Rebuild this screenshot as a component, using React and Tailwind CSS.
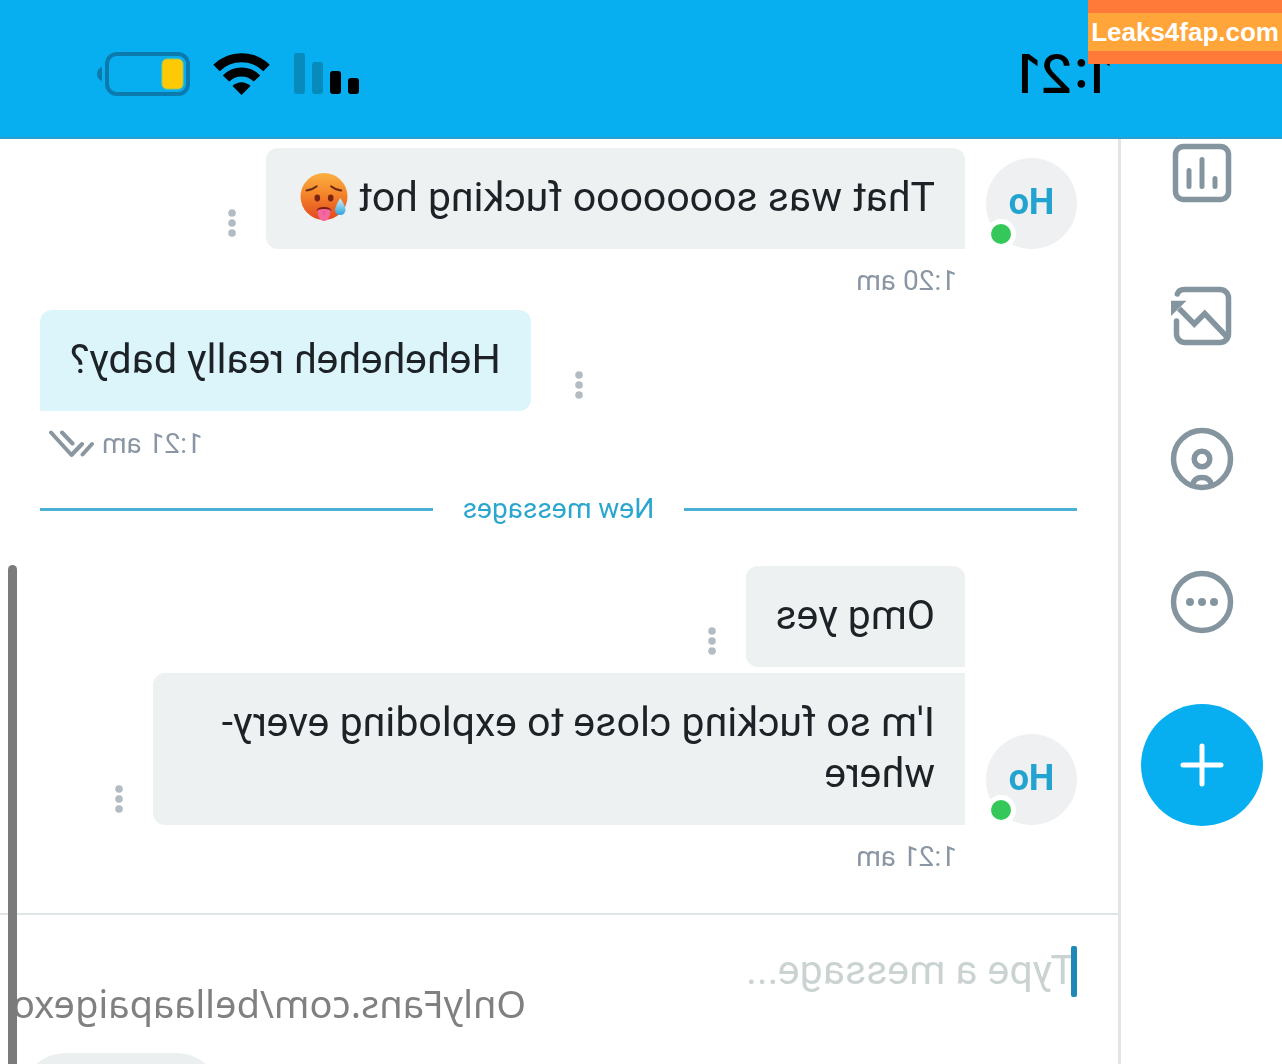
import React, { useState } from 'react';

const SignalIcon = () => (
  <svg width="66" height="42" viewBox="0 0 66 42" fill="#000">
    <rect x="0" y="25" width="11" height="16" rx="3" />
    <rect x="18" y="18" width="11" height="23" rx="3" />
    <rect x="36" y="9" width="11" height="32" rx="3" fill="#078bbd" />
    <rect x="54" y="0" width="11" height="41" rx="3" fill="#078bbd" />
  </svg>
);

const WifiIcon = () => (
  <svg width="57" height="42" viewBox="0 0 57 42" fill="none" stroke="#000" strokeWidth="9">
    <path d="M3.5 15A35.5 35.5 0 0 1 53.5 15" />
    <path d="M13 25.5A21.5 21.5 0 0 1 44 25.5" />
    <path d="M28.5 42L19.5 33Q28.5 25.5 37.5 33Z" fill="#000" stroke="none" />
  </svg>
);

const BatteryIcon = () => (
  <svg width="94" height="44" viewBox="0 0 94 44">
    <rect x="2" y="2" width="81" height="40" rx="10" fill="none" stroke="#0b7aad" strokeWidth="4" />
    <rect x="7" y="7" width="21" height="30" rx="5" fill="#ffc905" stroke="#a5c95a" strokeWidth="1" />
    <path d="M88 15Q93 17 93 22Q93 27 88 29Z" fill="#0b7aad" />
  </svg>
);

const HotFace = () => (
  <svg className="-my-2 mr-1 inline-block align-[-3px]" width="48" height="50" viewBox="0 0 48 50" role="img" aria-label="hot face">
    <defs>
      <linearGradient id="face" x1="0" y1="0" x2="0" y2="1">
        <stop offset="0" stopColor="#fbb040" />
        <stop offset="0.4" stopColor="#f58a2c" />
        <stop offset="1" stopColor="#e2481d" />
      </linearGradient>
      <linearGradient id="drop" x1="0" y1="0" x2="0" y2="1">
        <stop offset="0" stopColor="#d3f0fb" />
        <stop offset="1" stopColor="#2fa5dc" />
      </linearGradient>
    </defs>
    <circle cx="24" cy="24.5" r="23.5" fill="url(#face)" />
    <path d="M6.7 18.5Q12 18.3 17 14.3M41.5 18.5Q36.5 18.3 31.3 14.3" fill="none" stroke="#6b2b12" strokeWidth="2" strokeLinecap="round" />
    <ellipse cx="17.3" cy="26" rx="2.8" ry="3.4" fill="#7a2411" />
    <ellipse cx="30.7" cy="26" rx="2.8" ry="3.4" fill="#7a2411" />
    <path d="M16.5 39Q17 35 24 35Q31 35 31.5 39Z" fill="#7a1d10" />
    <path d="M17.5 38Q24 36 30.5 38L30 43Q28 49 24 49Q20 49 18 43Z" fill="#f5679f" />
    <path d="M24 39V43" stroke="#de5089" strokeWidth="1" />
    <path d="M7.8 26Q2.5 34 2.5 38Q3 43 7.8 43Q12.8 43 13 38Q12.5 34 7.8 26Z" fill="url(#drop)" />
  </svg>
);

const ReadChecks = () => (
  <svg width="46" height="28" viewBox="0 0 46 28" fill="none" stroke="#8a96a0" strokeWidth="4" strokeLinecap="round" strokeLinejoin="round">
    <path d="M43 2.5L22.5 25L12 14M32 2.5L21.5 13.5M2 14L11.5 24.5" />
  </svg>
);

const navItems = [
  {
    label: 'Statistics',
    icon: (
      <>
        <rect x="5.5" y="5.5" width="53" height="53" rx="8" />
        <path d="M19 37.5V45.5M32 18.5V45.5M45 29.5V45.5" strokeWidth="5" />
      </>
    ),
  },
  {
    label: 'Vault',
    icon: (
      <>
        <path d="M56.7 10Q55 5.5 50 5.5H14A8.5 8.5 0 0 0 5.5 14V50A8.5 8.5 0 0 0 14 58.5H49A8.5 8.5 0 0 0 57.5 50V37" />
        <path d="M7 53L29.3 29.5L39.7 40L55 24.5" strokeLinecap="butt" strokeLinejoin="miter" />
        <path d="M63 16.7H47.5L63 32Z" fill="currentColor" stroke="none" />
      </>
    ),
  },
  {
    label: 'Profile',
    icon: (
      <>
        <circle cx="32" cy="32" r="28.5" />
        <circle cx="32" cy="32" r="7.8" />
        <path d="M22.5 58Q24 50.5 32 50.5Q40 50.5 41.5 58" />
      </>
    ),
  },
  {
    label: 'More',
    icon: (
      <>
        <circle cx="32" cy="32" r="28.5" />
        <g fill="currentColor" stroke="none">
          <circle cx="20" cy="32" r="4" />
          <circle cx="32" cy="32" r="4" />
          <circle cx="44" cy="32" r="4" />
        </g>
      </>
    ),
  },
];

const StatusBar = () => (
  <header className="flex h-[139px] shrink-0 items-center border-b-2 border-[#2b9fcd] bg-[#07aff1] pt-2.5 pr-24 pl-[170px]">
    <span className="font-['Inter',sans-serif] text-[54px] leading-none font-medium text-black">1:21</span>
    <div className="ml-auto flex items-center gap-[23px]">
      <SignalIcon />
      <WifiIcon />
      <BatteryIcon />
    </div>
  </header>
);

const Sidebar = () => (
  <nav className="flex w-[164px] shrink-0 flex-col items-center border-r-[3px] border-[#e0e5e8] pt-0.5 pr-0.5">
    <div className="flex flex-col gap-[79px]">
      {navItems.map((item) => (
        <button key={item.label} type="button" aria-label={item.label} className="text-[#8595a0]">
          <svg width="64" height="64" viewBox="0 0 64 64" fill="none" stroke="currentColor" strokeWidth="5.5" strokeLinecap="round" strokeLinejoin="round">
            {item.icon}
          </svg>
        </button>
      ))}
    </div>
    <button type="button" aria-label="New post" className="mt-[70px] flex size-[122px] items-center justify-center rounded-full bg-[#07aff1]">
      <svg width="44" height="44" viewBox="0 0 44 44" stroke="#fff" strokeWidth="5" strokeLinecap="round">
        <path d="M22 3V41M3 22H41" />
      </svg>
    </button>
  </nav>
);

const Avatar = () => (
  <div className="relative flex size-[91px] items-center justify-center rounded-full bg-[#eef0f1] pb-1 text-4xl font-bold text-[#22a3d0]">
    Ho
    <span className="absolute right-0 bottom-0 size-[30px] rounded-full border-[5px] border-white bg-[#34c759]" />
  </div>
);

const MessageMenu = () => (
  <button type="button" aria-label="Message options" className="mb-3">
    <svg width="8" height="28" viewBox="0 0 8 28" fill="#b3bcc2">
      <circle cx="4" cy="4" r="3.8" />
      <circle cx="4" cy="14" r="3.8" />
      <circle cx="4" cy="24" r="3.8" />
    </svg>
  </button>
);

const Received = ({ avatar, corners, children }) => (
  <div className="flex items-end">
    <div className="mr-[21px] w-[91px] shrink-0">{avatar && <Avatar />}</div>
    <p className={`mr-[30px] max-w-[812px] bg-[#edf1f2] px-[30px] pt-6 pb-[26px] text-[41px] leading-[51px] ${corners}`}>
      {children}
    </p>
    <MessageMenu />
  </div>
);

const Sent = ({ children }) => (
  <div className="flex items-end justify-end">
    <MessageMenu />
    <p className="ml-[44px] rounded-xl rounded-br-none bg-[#dcf5fa] px-[30px] pt-6 pb-[26px] text-[41px] leading-[51px]">
      {children}
    </p>
  </div>
);

const Chat = () => (
  <section className="pt-[9px] pr-10 pb-[27px] pl-[41px] text-[#1c2226]">
    <Received avatar corners="rounded-xl rounded-bl-none">
      That was sooooooo fucking hot <HotFace />
    </Received>
    <time className="ml-[120px] block h-[61px] text-[28px] leading-[64px] text-[#8a96a3]">1:20 am</time>

    <Sent>Heheheheh really baby?</Sent>
    <div className="flex h-[61px] items-center justify-end gap-2 pt-1 pr-2 text-[28px] text-[#8a96a3]">
      <time>1:21 am</time>
      <ReadChecks />
    </div>

    <div className="mb-5 flex h-[74px] items-center gap-[30px] text-[28px] text-[#2ba6cf]">
      <span className="h-[3px] flex-1 bg-[#4bb0d4]" />
      New messages
      <span className="h-[3px] flex-1 bg-[#4bb0d4]" />
    </div>

    <div className="flex flex-col gap-1.5">
      <Received corners="rounded-xl rounded-bl-none">Omg yes</Received>
      <Received avatar corners="rounded-r-xl">I'm so fucking close to exploding every&shy;where</Received>
    </div>
    <time className="ml-[120px] block h-[61px] text-[28px] leading-[64px] text-[#8a96a3]">1:21 am</time>
  </section>
);

const Composer = () => {
  const [message, setMessage] = useState('');

  return (
    <form className="border-t-2 border-[#e0e5e8] pt-[31px] pr-5 pl-[41px]" onSubmit={(e) => e.preventDefault()}>
      <div className="relative">
        <input
          type="text"
          aria-label="Message"
          value={message}
          onChange={(e) => setMessage(e.target.value)}
          placeholder="Type a message..."
          className="block h-[51px] w-full pb-0.5 pl-0.5 text-[41px] caret-[#1e88b8] outline-none placeholder:text-[#cbd3d2]"
        />
        {!message && <span className="absolute top-0 left-0 h-[51px] w-[6px] rounded-xs bg-[#1e88b8]" />}
      </div>
      <button type="submit" aria-label="Send" className="mt-14 ml-auto block h-[92px] w-[202px] rounded-full bg-[#ebeff0]" />
    </form>
  );
};

const App = () => (
  <div className="relative h-screen overflow-hidden bg-white font-['Roboto',sans-serif]">
    {/* the screen is flipped, the site tag on top of it is not */}
    <div className="relative flex h-full -scale-x-100 flex-col overflow-hidden">
      <StatusBar />
      <div className="flex min-h-0 flex-1">
        <Sidebar />
        <main className="min-w-0 flex-1">
          <Chat />
          <Composer />
        </main>
      </div>
      <p className="absolute right-3 bottom-[31px] font-['Noto_Sans',sans-serif] text-[38px] leading-[60px] text-[#808080]">
        OnlyFans.com/bellaapaigexo
      </p>
      <span className="absolute top-[565px] right-2 bottom-0 w-[9px] rounded-t-full bg-[#7b7b7b]" />
    </div>

    <div className="absolute top-0 right-0 bg-[#ff7a39] py-[13px]">
      <p className="bg-[#ffa53a] px-[3px] font-['Liberation_Sans',sans-serif] text-[26px] leading-[38px] font-bold text-white">
        Leaks4fap.com
      </p>
    </div>
  </div>
);

export default App;
